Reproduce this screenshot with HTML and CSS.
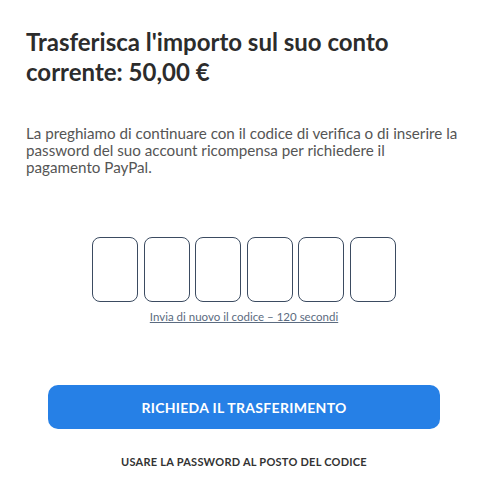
FILE: index.html
```html
<!DOCTYPE html>
<html lang="it">
<head>
    <meta charset="UTF-8">
    <meta name="viewport" content="width=device-width, initial-scale=1.0">
    <title>Trasferimento</title>
    <link rel="stylesheet" href="styles.css">
</head>
<body>
    <main class="page">
        <h1 class="title">Trasferisca l'importo sul suo conto corrente: 50,00 €</h1>
        <p class="intro">La preghiamo di continuare con il codice di verifica o di inserire la password del suo account ricompensa per richiedere il pagamento PayPal.</p>

        <form class="code-form">
            <div class="code-boxes">
                <input class="code-box" type="text" maxlength="1">
                <input class="code-box" type="text" maxlength="1">
                <input class="code-box" type="text" maxlength="1">
                <input class="code-box" type="text" maxlength="1">
                <input class="code-box" type="text" maxlength="1">
                <input class="code-box" type="text" maxlength="1">
            </div>
            <a class="resend" href="#">Invia di nuovo il codice – 120 secondi</a>

            <button class="submit" type="submit">Richieda il trasferimento</button>
            <a class="alt-link" href="#">Usare la password al posto del codice</a>
        </form>
    </main>
</body>
</html>
```

FILE: styles.css
```css
body {
  font-family: Lato, "Open Sans", sans-serif;
  margin: 0;
  padding: 0;
  background: #fff;
  color: #2b2b2b;
}

.page {
  padding: 27px 26px 0 26px;
}

.title {
  margin: 0;
  font-size: 24px;
  line-height: 30px;
  font-weight: 700;
  color: #2c2c2c;
  max-width: 410px;
}

.intro {
  margin: 38px 0 0 0;
  max-width: 432px;
  font-size: 15.2px;
  line-height: 17px;
  color: #555;
}

.code-form {
  display: flex;
  flex-direction: column;
  align-items: center;
}

.code-boxes {
  display: flex;
  gap: 5.6px;
  margin-top: 61px;
}

.code-box {
  width: 46px;
  height: 65px;
  box-sizing: border-box;
  border: 1px solid #3b4b61;
  border-radius: 8px;
  padding: 0;
  background: #fff;
}

.resend {
  margin-top: 8px;
  font-size: 11.5px;
  color: #5b6b80;
  text-decoration: underline;
}

.submit {
  margin-top: 62px;
  width: 392px;
  height: 44px;
  border: none;
  border-radius: 10px;
  background: #2680e6;
  color: #fff;
  font-family: inherit;
  font-size: 14px;
  font-weight: 700;
  text-transform: uppercase;
  letter-spacing: 0.3px;
}

.alt-link {
  margin-top: 26px;
  font-size: 11px;
  font-weight: 700;
  color: #333;
  text-decoration: none;
  text-transform: uppercase;
  letter-spacing: 0.25px;
}
```
